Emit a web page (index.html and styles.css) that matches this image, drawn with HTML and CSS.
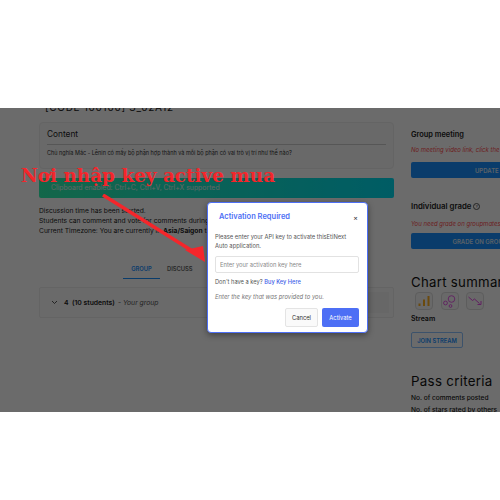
FILE: index.html
```html
<!DOCTYPE html>
<html lang="en">
<head>
    <meta charset="UTF-8">
    <meta name="viewport" content="width=device-width, initial-scale=1.0">
    <title>Activation Required</title>
    <link rel="stylesheet" href="styles.css">
</head>
<body>

<div class="shot">
    <div class="page">
        <div class="main-col">
            <p class="code-title">[CODE 100100] S_02A12</p>
            <div class="content-card">
                <h3 class="content-title">Content</h3>
                <p class="content-text">Chủ nghĩa Mác - Lênin có mấy bộ phận hợp thành và mỗi bộ phận có vai trò vị trí như thế nào?</p>
            </div>
            <div class="clipboard-banner">Clipboard enabled: Ctrl+C, Ctrl+V, Ctrl+X supported</div>
            <div class="discussion-info">
                <p>Discussion time has been started.</p>
                <p>Students can comment and vote for comments during this time.</p>
                <p>Current Timezone: You are currently in <b>Asia/Saigon</b> timezone</p>
            </div>
            <div class="tabs">
                <span class="tab active">GROUP</span>
                <span class="tab">DISCUSS</span>
            </div>
            <div class="group-card">
                <svg class="chevron" width="7" height="5" viewBox="0 0 7 5"><path d="M1 1l2.500 2.500L6 1" fill="none" stroke="#2b2b2b" stroke-width="0.800"/></svg>
                <span class="group-name">4 &nbsp;(10 students)</span>
                <span class="group-note">- <i>Your group</i></span>
                <div class="group-shade"></div>
            </div>
        </div>
        <div class="side-col">
            <h4 class="side-title first">Group meeting</h4>
            <p class="side-warning">No meeting video link, click the button to update</p>
            <button class="side-button update">UPDATE MEETING LINK</button>
            <h4 class="side-title grade">Individual grade <span class="help">?</span></h4>
            <p class="side-warning grade-note">You need grade on groupmates first to see your grade</p>
            <button class="side-button grade-button">GRADE ON GROUPMATES</button>
            <h2 class="side-heading chart">Chart summary</h2>
            <div class="chart-icons">
                <div class="chart-icon">
                    <svg width="12" height="12" viewBox="0 0 12 12"><path d="M1.500 11V8.500M6 11V4.500M10.500 11V1" stroke="#ffb020" stroke-width="2" fill="none"/></svg>
                </div>
                <div class="chart-icon">
                    <svg width="13" height="13" viewBox="0 0 13 13" fill="none" stroke="#e64ae6" stroke-width="0.900"><circle cx="8.500" cy="4" r="3.300"/><circle cx="2.500" cy="8" r="1.900"/><circle cx="7.500" cy="11" r="1.400"/></svg>
                </div>
                <div class="chart-icon">
                    <svg width="14" height="10" viewBox="0 0 14 10" fill="none" stroke="#e64ae6" stroke-width="1"><path d="M0.500 1l4 3.500 2-1.500 5 4.500"/><path d="M13 5v3.500H9.500"/></svg>
                </div>
            </div>
            <h4 class="side-title stream">Stream</h4>
            <button class="join-button">JOIN STREAM</button>
            <h2 class="side-heading pass">Pass criteria</h2>
            <p class="criteria">No. of comments posted</p>
            <p class="criteria">No. of stars rated by others</p>
        </div>
    </div>

    <div class="backdrop"></div>

    <div class="dialog">
        <div class="dialog-head">
            <h3 class="dialog-title">Activation Required</h3>
            <span class="dialog-close">×</span>
        </div>
        <p class="dialog-text">Please enter your API key to activate thisEtiNext<br>Auto application.</p>
        <input class="key-input" type="text" placeholder="Enter your activation key here">
        <p class="dialog-buy">Don't have a key? <a class="buy-link">Buy Key Here</a></p>
        <p class="dialog-hint">Enter the key that was provided to you.</p>
        <div class="dialog-actions">
            <button class="btn-cancel">Cancel</button>
            <button class="btn-activate">Activate</button>
        </div>
    </div>

    <div class="note">Nơi nhập key active mua</div>
    <svg class="note-arrow" width="120" height="80" viewBox="0 0 120 80">
        <path d="M2 1L93 58" stroke="#f4262b" stroke-width="3.500" fill="none"/>
        <path d="M84 56L102 52L104 68Z" fill="#f4262b"/>
    </svg>
</div>

</body>
</html>
```
FILE: styles.css
```css
body { font-family: Inter, "Open Sans", sans-serif; margin: 0; padding: 0; background-color: #fff; }
p, h2, h3, h4 { margin: 0; }
button { font-family: inherit; }

.shot { position: relative; margin-top: 108px; height: 304px; overflow: hidden; background-color: #fff; }
.page { display: flex; gap: 17px; height: 100%; padding-left: 39px; overflow: hidden; background-color: #fff; }
.backdrop { position: absolute; inset: 0; background-color: rgba(0,0,0,0.58); }

.main-col { flex: 0 0 355px; min-width: 0; }
.code-title { margin-top: -7px; margin-left: 6px; height: 21px; font-size: 10px; line-height: 12px; letter-spacing: 0.7px; color: #222; }
.content-card { height: 47px; box-sizing: border-box; padding: 5px 7px; border: 1px solid #eee; border-radius: 4px; background-color: #fafafa; }
.content-title { font-size: 8.300px; line-height: 13px; font-weight: 400; color: #222; padding-bottom: 3px; border-bottom: 1px solid #ccc; }
.content-text { margin-top: 4px; font-size: 5.500px; line-height: 8px; color: #333; white-space: nowrap; }
.clipboard-banner { margin-top: 9px; height: 20px; box-sizing: border-box; padding: 0 12px; border-radius: 2px; background: linear-gradient(90deg, #2ef5b0, #00dcf0); color: #e0f8f2; font-size: 6.900px; line-height: 20px; }
.discussion-info { margin-top: 8px; font-size: 6.700px; line-height: 10px; color: #222; white-space: nowrap; }

.tabs { display: flex; margin-top: 24px; margin-left: 84px; }
.tab { padding: 0 7px; font-size: 5.800px; line-height: 18px; font-weight: 600; color: #666; }
.tab.active { width: 23px; padding: 0 7px; color: #1890ff; border-bottom: 1px solid #1890ff; text-align: center; }

.group-card { position: relative; display: flex; align-items: center; height: 31px; box-sizing: border-box; margin-top: 8px; padding-left: 11px; border: 1px solid #eee; border-radius: 2px; background-color: #fcfcfc; font-size: 6.800px; color: #222; }
.chevron { margin-right: 6px; }
.group-name { font-weight: 600; margin-right: 3px; }
.group-note { color: #555; }
.group-shade { position: absolute; right: 4px; top: 4px; bottom: 4px; width: 30px; background-color: #f6f6f6; }

.side-col { flex: 1 0 110px; min-width: 0; white-space: nowrap; color: #222; }
.side-title { font-size: 7.400px; line-height: 10px; font-weight: 600; }
.side-title.first { margin-top: 22px; }
.side-title.grade { margin-top: 23px; font-size: 7.800px; }
.side-title.stream { margin-top: 4px; font-size: 7px; }
.help { display: inline-block; width: 5px; height: 5px; border: 1px solid #555; border-radius: 50%; font-size: 4px; line-height: 5px; text-align: center; font-weight: 400; vertical-align: 1px; }
.side-warning { margin-top: 6px; font-size: 6px; line-height: 8px; font-style: italic; color: #ff4d4f; }
.side-warning.grade-note { margin-top: 9px; }
.side-button { display: block; height: 16px; margin-top: 8px; padding: 0; border: none; border-radius: 2px; background-color: #1890ff; color: #d8e6f5; font-size: 6px; font-weight: 600; text-align: center; }
.side-button.update { width: 196px; }
.side-button.grade-button { width: 158px; margin-top: 5px; }
.side-heading { font-size: 13.200px; line-height: 16px; font-weight: 400; letter-spacing: 0.3px; color: #111; }
.side-heading.chart { margin-top: 25px; }
.side-heading.pass { margin-top: 25px; font-size: 13.300px; }
.chart-icons { display: flex; gap: 7.500px; margin-top: 2px; margin-left: 4px; }
.chart-icon { display: flex; align-items: center; justify-content: center; width: 18px; height: 18px; box-sizing: border-box; border: 1px solid #ddd; border-radius: 4px; background-color: #fafafa; }
.join-button { display: block; width: 52px; height: 16px; margin-top: 8px; padding: 0; border: 1px solid #90c4ff; border-radius: 2px; background-color: transparent; color: #1890ff; font-size: 5.800px; font-weight: 600; }
.criteria { font-size: 6.600px; line-height: 12px; font-weight: 500; }
.side-heading.pass + .criteria { margin-top: 3px; }

.dialog { position: absolute; left: 207px; top: 94px; width: 161px; height: 131px; box-sizing: border-box; padding: 0 8px 0 7px; border: 1.500px solid #4d6ff5; border-radius: 4px; background-color: #fff; box-shadow: 0 2px 6px rgba(0,0,0,0.4); color: #555; }
.dialog-head { display: flex; justify-content: space-between; align-items: center; height: 26px; padding-left: 4px; }
.dialog-title { font-size: 7.500px; font-weight: 600; color: #4d6ff5; margin-top: 1px; }
.dialog-close { font-size: 7px; color: #333; margin-right: 1px; margin-top: 2px; }
.dialog-text { margin-top: 3px; font-size: 5.800px; line-height: 9px; white-space: nowrap; }
.key-input { display: block; width: 100%; height: 17px; box-sizing: border-box; margin-top: 6px; padding: 0 4px; border: 1px solid #e2e2e2; border-radius: 2px; font-family: inherit; font-size: 5.800px; }
.key-input::placeholder { color: #888; }
.dialog-buy { margin-top: 4px; font-size: 5.700px; line-height: 9px; }
.buy-link { color: #3f5fe8; font-weight: 500; }
.dialog-hint { margin-top: 6px; font-size: 5.900px; line-height: 9px; font-style: italic; color: #777; }
.dialog-actions { display: flex; justify-content: flex-end; gap: 4px; margin-top: 7px; }
.btn-cancel { width: 33px; height: 19px; padding: 0; border: 1px solid #e4e4e4; border-radius: 2px; background-color: #fafafa; color: #333; font-size: 5.800px; }
.btn-activate { width: 37px; height: 19px; padding: 0; border: none; border-radius: 2px; background-color: #4d6ff5; color: #fff; font-size: 5.800px; }

.note { position: absolute; left: 21px; top: 57px; font-family: "DejaVu Serif", serif; font-size: 18.400px; line-height: 22px; font-weight: 700; color: #f4262b; white-space: nowrap; }
.note-arrow { position: absolute; left: 101px; top: 86px; }
```
